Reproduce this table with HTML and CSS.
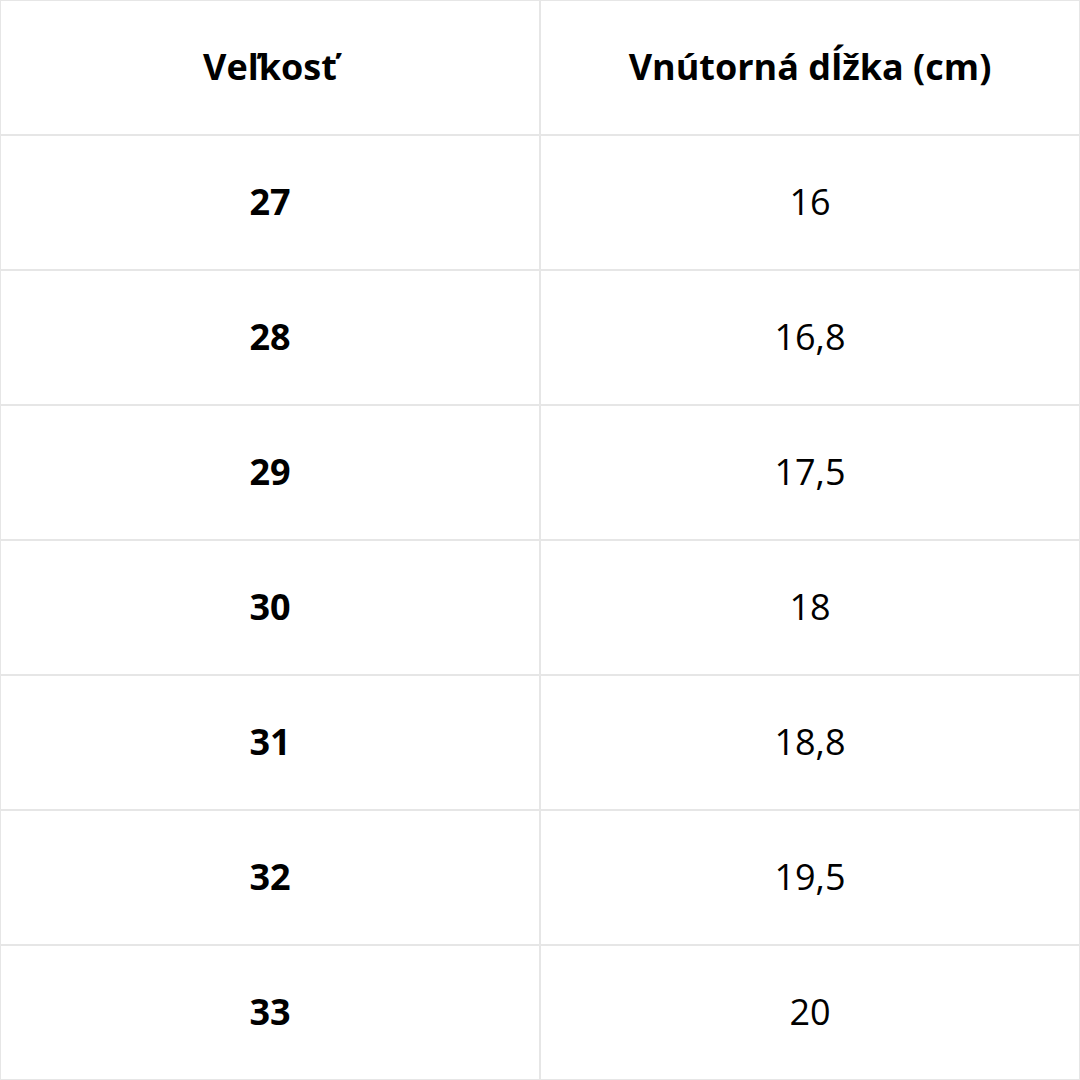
FILE: index.html
```html
<!DOCTYPE html>
<html lang="sk">
<head>
<meta charset="utf-8">
<link rel="stylesheet" href="styles.css">
</head>
<body>
<table class="size-table">
  <thead>
    <tr><th>Veľkosť</th><th>Vnútorná dĺžka (cm)</th></tr>
  </thead>
  <tbody>
    <tr><td class="size">27</td><td>16</td></tr>
    <tr><td class="size">28</td><td>16,8</td></tr>
    <tr><td class="size">29</td><td>17,5</td></tr>
    <tr><td class="size">30</td><td>18</td></tr>
    <tr><td class="size">31</td><td>18,8</td></tr>
    <tr><td class="size">32</td><td>19,5</td></tr>
    <tr><td class="size">33</td><td>20</td></tr>
  </tbody>
</table>
</body>
</html>
```

FILE: styles.css
```css
html, body {
  margin: 0;
  padding: 0;
  background: #fff;
}
body {
  font-family: "Open Sans", "Liberation Sans", sans-serif;
  color: #000;
}
.size-table {
  width: 1080px;
  height: 1080px;
  border-collapse: separate;
  border-spacing: 0;
  table-layout: fixed;
}
.size-table th,
.size-table td {
  border: 1px solid #e6e6e6;
  text-align: center;
  vertical-align: middle;
  height: 131px;
  padding: 0 0 2px 0;
  font-size: 36px;
  line-height: 1;
}
.size-table th {
  font-weight: 700;
}
.size-table td {
  font-weight: 400;
}
.size-table td.size {
  font-weight: 700;
}
```
